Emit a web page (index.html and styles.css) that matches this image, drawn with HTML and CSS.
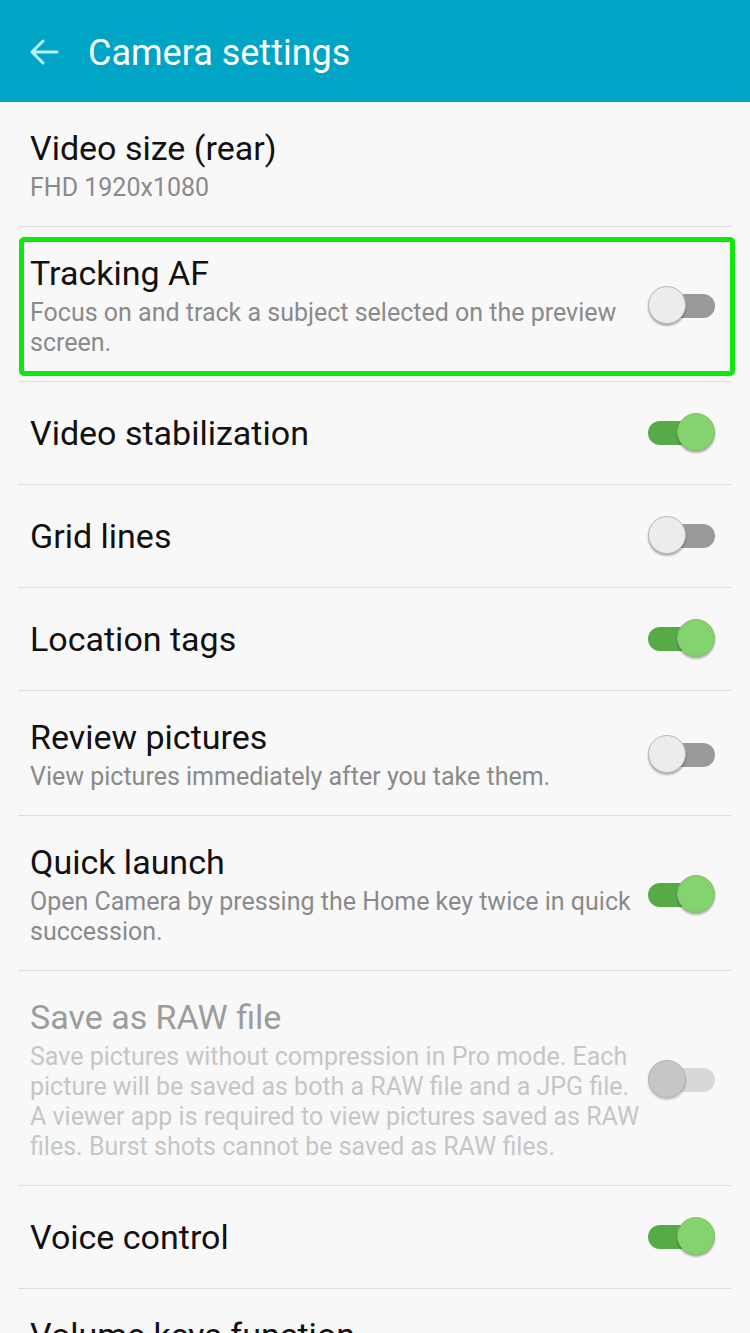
FILE: index.html
```html
<!DOCTYPE html>
<html>
<head>
<meta charset="utf-8">
<link rel="stylesheet" href="styles.css">
</head>
<body>
<header class="appbar">
  <svg class="back" width="30" height="28" viewBox="0 0 30 28">
    <path d="M28 14H3M14 3L3 14L14 25" fill="none" stroke="#b8f2ff" stroke-width="3" stroke-linecap="round" stroke-linejoin="round"/>
  </svg>
  <h1 class="apptitle">Camera settings</h1>
</header>
<main class="list">
  <div class="row first">
    <div class="text">
      <div class="title">Video size (rear)</div>
      <div class="sub">FHD 1920x1080</div>
    </div>
  </div>
  <div class="row highlighted">
    <div class="text">
      <div class="title">Tracking AF</div>
      <div class="sub">Focus on and track a subject selected on the preview screen.</div>
    </div>
    <div class="switch off"><span class="track"></span><span class="thumb"></span></div>
    <div class="highlight"></div>
  </div>
  <div class="row single">
    <div class="text"><div class="title">Video stabilization</div></div>
    <div class="switch on"><span class="track"></span><span class="thumb"></span></div>
  </div>
  <div class="row single">
    <div class="text"><div class="title">Grid lines</div></div>
    <div class="switch off"><span class="track"></span><span class="thumb"></span></div>
  </div>
  <div class="row single">
    <div class="text"><div class="title">Location tags</div></div>
    <div class="switch on"><span class="track"></span><span class="thumb"></span></div>
  </div>
  <div class="row">
    <div class="text">
      <div class="title">Review pictures</div>
      <div class="sub">View pictures immediately after you take them.</div>
    </div>
    <div class="switch off"><span class="track"></span><span class="thumb"></span></div>
  </div>
  <div class="row">
    <div class="text">
      <div class="title">Quick launch</div>
      <div class="sub">Open Camera by pressing the Home key twice in quick succession.</div>
    </div>
    <div class="switch on"><span class="track"></span><span class="thumb"></span></div>
  </div>
  <div class="row disabled">
    <div class="text">
      <div class="title">Save as RAW file</div>
      <div class="sub">Save pictures without compression in Pro mode. Each picture will be saved as both a RAW file and a JPG file. A viewer app is required to view pictures saved as RAW files. Burst shots cannot be saved as RAW files.</div>
    </div>
    <div class="switch off"><span class="track"></span><span class="thumb"></span></div>
  </div>
  <div class="row single">
    <div class="text"><div class="title">Voice control</div></div>
    <div class="switch on"><span class="track"></span><span class="thumb"></span></div>
  </div>
  <div class="row last">
    <div class="text"><div class="title">Volume keys function</div></div>
  </div>
</main>
</body>
</html>
```
FILE: styles.css
```css
html, body {
  margin: 0;
  padding: 0;
  background: #f8f8f8;
  font-family: Roboto, "Noto Sans", sans-serif;
  overflow: hidden;
  height: 1333px;
}

.appbar {
  height: 102px;
  background: #00a5c5;
  display: flex;
  align-items: center;
  padding-left: 29px;
  padding-top: 2px;
  box-sizing: border-box;
}

.back {
  display: block;
  margin-right: 29px;
}

.apptitle {
  margin: 0;
  padding-top: 2px;
  font-weight: 400;
  font-size: 36px;
  line-height: 40px;
  color: #ffffff;
}

.list {
  margin: 0 18px;
}

.row {
  position: relative;
  display: flex;
  align-items: center;
  padding: 26px 17px 23px 12px;
  border-bottom: 1px solid #dedede;
}

.row.single {
  height: 103px;
  padding-top: 0;
  padding-bottom: 0;
  box-sizing: border-box;
}

.text {
  flex: 1;
  min-width: 0;
  padding-right: 2px;
}

.title {
  font-size: 34px;
  line-height: 40px;
  color: #111111;
}

.sub {
  margin-top: 5px;
  font-size: 25px;
  line-height: 30px;
  color: #8a8a8a;
}

.disabled .title {
  color: #9c9c9c;
}

.disabled .sub {
  color: #c6c6c6;
}

.switch {
  position: relative;
  width: 67px;
  height: 40px;
  flex: none;
}

.track {
  position: absolute;
  top: 8px;
  height: 24px;
  border-radius: 12px;
}

.thumb {
  position: absolute;
  top: 0;
  width: 38px;
  height: 38px;
  border-radius: 50%;
  box-sizing: border-box;
  box-shadow: 0 2px 2px rgba(0, 0, 0, 0.3);
}

.switch.off .track {
  left: 14px;
  right: 0;
  background: #9a9a9a;
}

.switch.off .thumb {
  left: 0;
  background: #ececec;
  border: 1px solid #b8b8b8;
}

.switch.on .track {
  left: 0;
  right: 14px;
  background: #58a948;
}

.switch.on .thumb {
  right: 0;
  background: #84d36e;
  border: 1px solid #7cc466;
}

.disabled .switch.off .track {
  background: #d8d8d8;
}

.disabled .switch.off .thumb {
  background: #c6c6c6;
  border-color: #b4b4b4;
  box-shadow: 0 2px 2px rgba(0, 0, 0, 0.2);
}

.highlight {
  position: absolute;
  left: 1px;
  right: -3px;
  top: 10px;
  bottom: 5px;
  border: 5px solid #0de80d;
  border-radius: 5px;
  pointer-events: none;
}
```
